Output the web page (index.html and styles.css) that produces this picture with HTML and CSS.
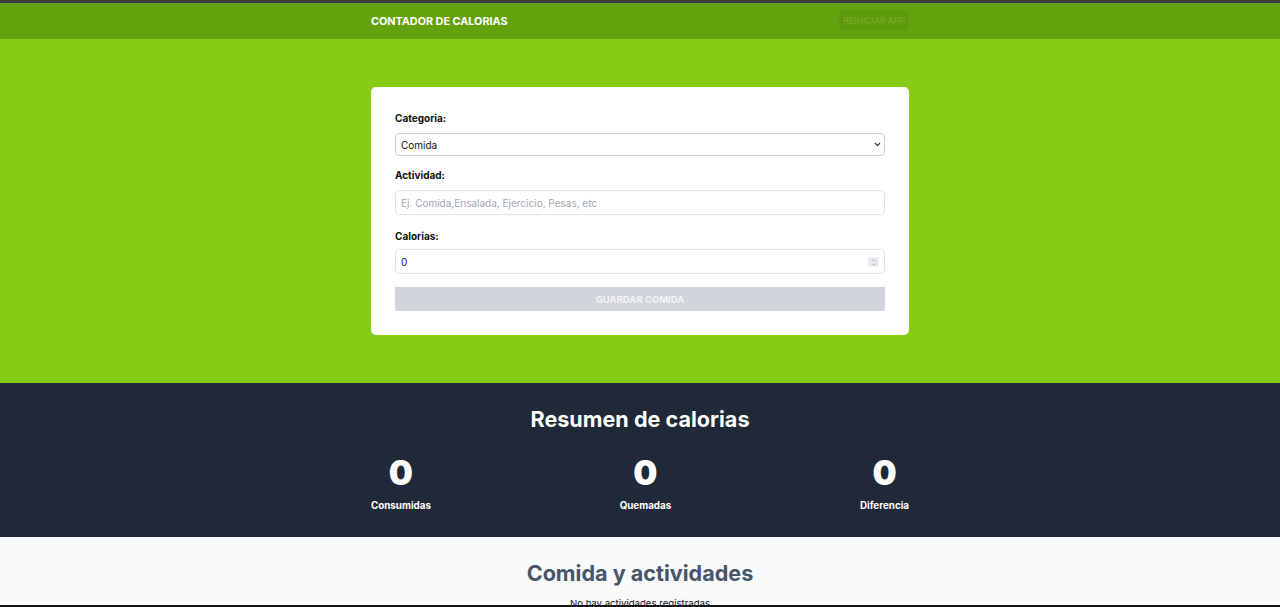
FILE: index.html
```html
<!DOCTYPE html>
<html lang="es">
<head>
<meta charset="utf-8">
<title>Contador de calorias</title>
<link rel="stylesheet" href="styles.css">
</head>
<body>
<div class="frame-top"></div>
<header class="header">
  <div class="container header-row">
    <h1 class="brand">CONTADOR DE CALORIAS</h1>
    <button class="reset" disabled>REINICIAR APP</button>
  </div>
</header>
<section class="form-section">
  <form class="card">
    <div class="field">
      <label for="category">Categoria:</label>
      <div class="select-wrap">
        <select id="category" class="control">
          <option>Comida</option>
          <option>Ejercicio</option>
        </select>
        <svg class="chevron" width="7" height="5" viewBox="0 0 7 5" aria-hidden="true"><path d="M1 1 L3.5 3.6 L6 1" fill="none" stroke="#333" stroke-width="1.2"/></svg>
      </div>
    </div>
    <div class="field">
      <label for="activity">Actividad:</label>
      <input id="activity" class="control" type="text" placeholder="Ej. Comida,Ensalada, Ejercicio, Pesas, etc">
    </div>
    <div class="field field-calories">
      <label for="calories">Calorias:</label>
      <div class="number-wrap">
        <input id="calories" class="control" type="number" value="0">
        <span class="spinner" aria-hidden="true">
          <svg width="6" height="9" viewBox="0 0 6 9"><path d="M1 3.5 L3 1.5 L5 3.5 M1 5.5 L3 7.5 L5 5.5" fill="none" stroke="#a0a4ab" stroke-width="0.9"/></svg>
        </span>
      </div>
    </div>
    <button type="button" class="save" disabled>GUARDAR COMIDA</button>
  </form>
</section>
<section class="summary">
  <div class="container">
    <h2 class="summary-title">Resumen de calorias</h2>
    <div class="stats">
      <div class="stat"><span class="num">0</span><span class="stat-label">Consumidas</span></div>
      <div class="stat"><span class="num">0</span><span class="stat-label">Quemadas</span></div>
      <div class="stat"><span class="num">0</span><span class="stat-label">Diferencia</span></div>
    </div>
  </div>
</section>
<section class="list">
  <h2 class="list-title">Comida y actividades</h2>
  <p class="empty">No hay actividades registradas</p>
</section>
<div class="frame-bottom"></div>
</body>
</html>
```

FILE: styles.css
```css
html, body {
  margin: 0;
  padding: 0;
  height: 607px;
  overflow: hidden;
}
body {
  font-family: Inter, "Noto Sans", "Liberation Sans", sans-serif;
  background: #f8fafc;
  position: relative;
}
.frame-top {
  height: 3px;
  background: #3c3c3c;
}
.frame-bottom {
  position: absolute;
  left: 0;
  right: 0;
  bottom: 0;
  height: 2px;
  background: #161616;
}
.container {
  width: 538px;
  margin: 0 auto;
}
.header {
  background: #63a20d;
  height: 36px;
}
.header-row {
  height: 100%;
  display: flex;
  align-items: center;
  justify-content: space-between;
}
.brand {
  margin: 0;
  font-size: 10.8px;
  font-weight: 700;
  color: #ffffff;
  letter-spacing: 0;
}
.reset {
  font-family: inherit;
  font-size: 8.6px;
  font-weight: 500;
  color: #76ad22;
  background: #5c9a0c;
  border: none;
  border-radius: 4px;
  height: 21px;
  padding: 0 4px;
  margin-bottom: 1px;
}
.form-section {
  background: #84cc16;
  height: 344px;
  padding-top: 48px;
  box-sizing: border-box;
}
.card {
  width: 538px;
  margin: 0 auto;
  background: #fff;
  border-radius: 5px;
  padding: 24px;
  box-sizing: border-box;
  display: flex;
  flex-direction: column;
  gap: 12px;
  height: 248px;
}
.field {
  display: flex;
  flex-direction: column;
  gap: 7px;
}
.field-calories {
  gap: 5px;
  margin-top: 2px;
}
.field label {
  font-size: 10px;
  font-weight: 700;
  color: #111;
  line-height: 15px;
}
.control {
  font-family: inherit;
  font-size: 10px;
  color: #111;
  border: 1px solid #e2e4e8;
  border-radius: 4px;
  height: 25px;
  padding: 0 5px;
  box-sizing: border-box;
  background: #fff;
  width: 100%;
  margin: 0;
}
.select-wrap, .number-wrap {
  position: relative;
}
select.control {
  display: block;
  height: 23px;
  border-color: #c9ccd2;
  padding-left: 5px;
  -webkit-appearance: none;
  appearance: none;
}
.chevron {
  position: absolute;
  right: 4px;
  top: 9px;
  pointer-events: none;
}
input.control {
  display: block;
}
.number-wrap input {
  -moz-appearance: textfield;
}
.number-wrap input::-webkit-inner-spin-button,
.number-wrap input::-webkit-outer-spin-button {
  -webkit-appearance: none;
  margin: 0;
}
.spinner {
  position: absolute;
  right: 6px;
  top: 8px;
  width: 11px;
  height: 10px;
  background: #eceef1;
  display: flex;
  align-items: center;
  justify-content: center;
}
.control::placeholder {
  color: #a3a8b1;
}
.save {
  margin-top: 1px;
  height: 24px;
  border: none;
  background: #d1d5db;
  color: #f3f4f6;
  font-family: inherit;
  font-weight: 700;
  font-size: 9.5px;
  width: 100%;
}
.summary {
  background: #1f2937;
  height: 154px;
  padding-top: 23px;
  box-sizing: border-box;
}
.summary-title {
  margin: 0;
  text-align: center;
  color: #fff;
  font-size: 21.6px;
  font-weight: 700;
  line-height: 27px;
}
.stats {
  display: flex;
  justify-content: space-between;
  margin-top: 20px;
}
.stat {
  display: flex;
  flex-direction: column;
  align-items: center;
}
.num {
  color: #fff;
  font-size: 34px;
  font-weight: 900;
  line-height: 40px;
}
.stat-label {
  color: #fff;
  font-size: 9.8px;
  font-weight: 700;
  margin-top: 7px;
}
.list {
  padding-top: 22px;
  text-align: center;
}
.list-title {
  margin: 0;
  font-size: 21.6px;
  font-weight: 700;
  color: #475569;
  line-height: 28px;
}
.empty {
  margin: 11px 0 0;
  font-size: 9.6px;
  color: #111;
}
```
